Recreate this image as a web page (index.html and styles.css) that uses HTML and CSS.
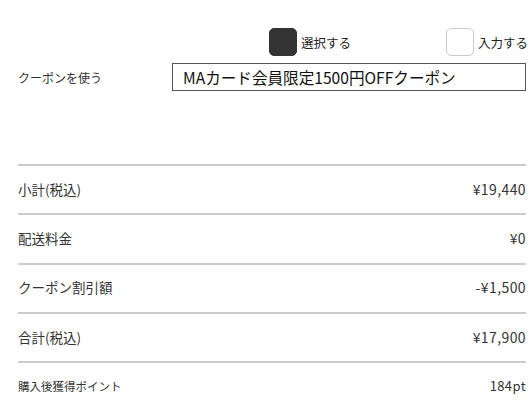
FILE: index.html
```html
<!DOCTYPE html>
<html lang="ja">
<head>
    <meta charset="UTF-8">
    <meta name="viewport" content="width=device-width, initial-scale=1.0">
    <title>クーポン</title>
    <link rel="stylesheet" href="styles.css">
</head>
<body>
    <div class="container">
        <div class="coupon-type">
            <label class="choice">
                <span class="box box-checked"></span>
                <span class="choice-label">選択する</span>
            </label>
            <label class="choice">
                <span class="box"></span>
                <span class="choice-label">入力する</span>
            </label>
        </div>
        <div class="coupon-row">
            <span class="coupon-label">クーポンを使う</span>
            <div class="coupon-select">MAカード会員限定1500円OFFクーポン</div>
        </div>
        <ul class="summary">
            <li>
                <span class="label">小計(税込)</span>
                <span class="value">¥19,440</span>
            </li>
            <li>
                <span class="label">配送料金</span>
                <span class="value">¥0</span>
            </li>
            <li>
                <span class="label">クーポン割引額</span>
                <span class="value">-¥1,500</span>
            </li>
            <li>
                <span class="label">合計(税込)</span>
                <span class="value">¥17,900</span>
            </li>
            <li class="points">
                <span class="label">購入後獲得ポイント</span>
                <span class="value">184pt</span>
            </li>
        </ul>
    </div>
</body>
</html>
```

FILE: styles.css
```css
*,
*::after,
*::before {
    box-sizing: border-box;
}
body {
    margin: 0;
    background: #fff;
    font-family: "Noto Sans CJK JP", "Noto Sans", sans-serif;
    color: #333;
}
.container {
    padding: 28px 6px 0 18px;
}
.coupon-type {
    display: grid;
    grid-template-columns: 1fr 1fr;
    margin-left: 154px;
}
.choice {
    display: flex;
    justify-content: flex-end;
    align-items: center;
    height: 28px;
    margin-right: -2px;
}
.box {
    width: 28px;
    height: 28px;
    border: 1.5px solid #ccc;
    border-radius: 5px;
    background: #fff;
}
.box-checked {
    background: #333;
    border-color: #333;
}
.choice-label {
    margin-left: 4px;
    font-size: 12.5px;
    color: #222;
}
.coupon-row {
    display: flex;
    align-items: center;
    margin-top: 7px;
}
.coupon-label {
    width: 154px;
    font-size: 12px;
}
.coupon-select {
    flex-grow: 1;
    height: 28px;
    padding: 0 10px;
    border: 1px solid #555;
    font-size: 15.6px;
    line-height: 26px;
    color: #111;
}
.summary {
    list-style: none;
    margin: 73px 0 0;
    padding: 0;
}
.summary li {
    display: flex;
    justify-content: space-between;
    align-items: center;
    height: 49.3px;
    padding-bottom: 2px;
    border-top: 2px solid #ccc;
    font-size: 13.5px;
}
.summary .value {
    font-size: 14px;
    letter-spacing: 0.4px;
}
.summary .points {
    font-size: 11.5px;
}
.summary .points .value {
    font-size: 13px;
}
```
